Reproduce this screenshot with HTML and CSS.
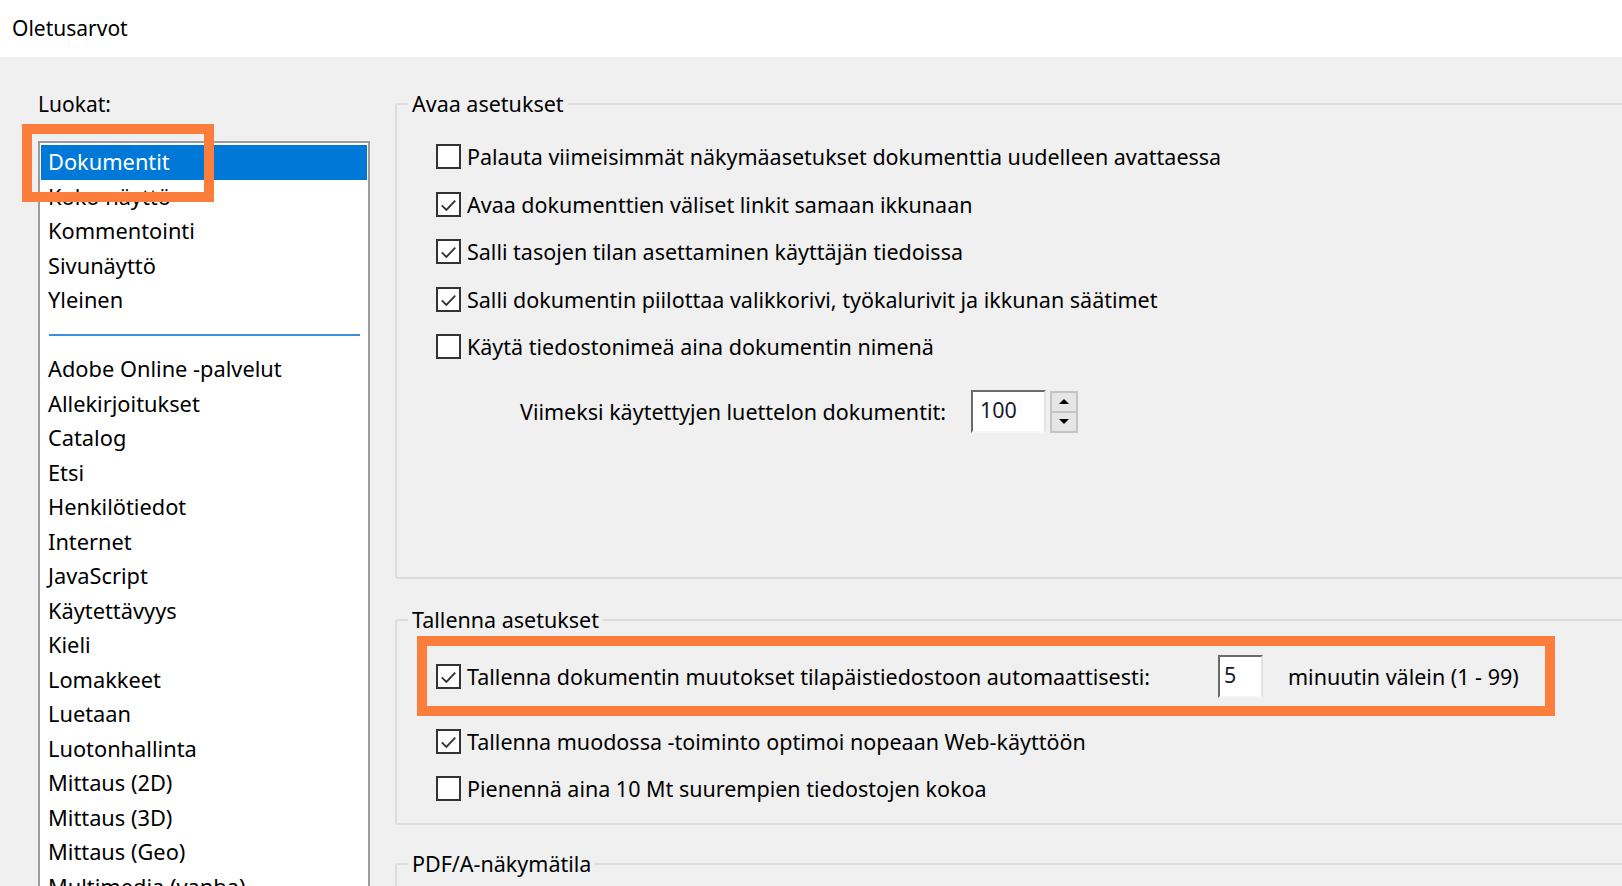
FILE: index.html
```
<!DOCTYPE html>
<html lang="fi">
<head>
<meta charset="utf-8">
<title>Oletusarvot</title>
<link rel="stylesheet" href="styles.css">
</head>
<body>
<header class="titlebar">Oletusarvot</header>
<main class="dialog">
  <section class="categories">
    <div class="cat-label">Luokat:</div>
    <div class="listbox">
      <div class="item selected">Dokumentit</div>
      <div class="item">Koko näyttö</div>
      <div class="item">Kommentointi</div>
      <div class="item">Sivunäyttö</div>
      <div class="item">Yleinen</div>
      <div class="item sep"><span class="sep-line"></span></div>
      <div class="item">Adobe Online -palvelut</div>
      <div class="item">Allekirjoitukset</div>
      <div class="item">Catalog</div>
      <div class="item">Etsi</div>
      <div class="item">Henkilötiedot</div>
      <div class="item">Internet</div>
      <div class="item">JavaScript</div>
      <div class="item">Käytettävyys</div>
      <div class="item">Kieli</div>
      <div class="item">Lomakkeet</div>
      <div class="item">Luetaan</div>
      <div class="item">Luotonhallinta</div>
      <div class="item">Mittaus (2D)</div>
      <div class="item">Mittaus (3D)</div>
      <div class="item">Mittaus (Geo)</div>
      <div class="item">Multimedia (vanha)</div>
    </div>
    <div class="highlight-box"></div>
  </section>

  <section class="settings">
    <fieldset class="group group-open">
      <legend>Avaa asetukset</legend>
      <div class="row"><span class="cb"></span><span>Palauta viimeisimmät näkymäasetukset dokumenttia uudelleen avattaessa</span></div>
      <div class="row"><span class="cb"><svg viewBox="0 0 25 25"><polyline points="4.5,13.5 10,19 20.5,8"/></svg></span><span>Avaa dokumenttien väliset linkit samaan ikkunaan</span></div>
      <div class="row"><span class="cb"><svg viewBox="0 0 25 25"><polyline points="4.5,13.5 10,19 20.5,8"/></svg></span><span>Salli tasojen tilan asettaminen käyttäjän tiedoissa</span></div>
      <div class="row"><span class="cb"><svg viewBox="0 0 25 25"><polyline points="4.5,13.5 10,19 20.5,8"/></svg></span><span>Salli dokumentin piilottaa valikkorivi, työkalurivit ja ikkunan säätimet</span></div>
      <div class="row"><span class="cb"></span><span>Käytä tiedostonimeä aina dokumentin nimenä</span></div>
      <div class="spin-row">
        <span class="spin-label">Viimeksi käytettyjen luettelon dokumentit:</span>
        <span class="textbox tb-wide">100</span>
        <span class="spinner">
          <span class="spin-btn"><span class="tri-up"></span></span>
          <span class="spin-btn"><span class="tri-down"></span></span>
        </span>
      </div>
    </fieldset>

    <fieldset class="group group-save">
      <legend>Tallenna asetukset</legend>
      <div class="row row-marked">
        <span class="cb"><svg viewBox="0 0 25 25"><polyline points="4.5,13.5 10,19 20.5,8"/></svg></span>
        <span class="auto-label">Tallenna dokumentin muutokset tilapäistiedostoon automaattisesti:</span>
        <span class="textbox tb-small">5</span>
        <span class="unit">minuutin välein (1 - 99)</span>
      </div>
      <div class="row row-plain"><span class="cb"><svg viewBox="0 0 25 25"><polyline points="4.5,13.5 10,19 20.5,8"/></svg></span><span>Tallenna muodossa -toiminto optimoi nopeaan Web-käyttöön</span></div>
      <div class="row row-plain"><span class="cb"></span><span>Pienennä aina 10 Mt suurempien tiedostojen kokoa</span></div>
    </fieldset>

    <fieldset class="group group-pdfa">
      <legend>PDF/A-näkymätila</legend>
    </fieldset>
  </section>
</main>
</body>
</html>
```

FILE: styles.css
```
* { box-sizing: border-box; }

html, body {
  margin: 0;
  padding: 0;
  width: 1622px;
  height: 886px;
  overflow: hidden;
  font-family: "Noto Sans", "Open Sans", sans-serif;
  font-size: 21px;
  color: #000;
}

body { background: #f0f0f0; }

.titlebar {
  height: 57px;
  line-height: 57px;
  padding-left: 12px;
  background: #fff;
}

.dialog {
  display: flex;
  height: 829px;
  background: #f0f0f0;
}

/* ---------- left: categories ---------- */
.categories {
  position: relative;
  width: 395px;
  flex: none;
  padding: 32px 0 0 38px;
}

.cat-label {
  line-height: 30px;
  margin-bottom: 22px;
}

.listbox {
  width: 332px;
  height: 800px;
  background: #fff;
  border: 2px solid #9c9c9c;
  padding: 2px 1px;
  overflow: hidden;
  font-size: 21.8px;
}

.item {
  height: 34.5px;
  line-height: 34.5px;
  padding-left: 7px;
  white-space: nowrap;
}

.item.selected {
  background: #0078d7;
  color: #fff;
}

.item.sep {
  display: flex;
  align-items: center;
  padding: 0 7px 0 8px;
}

.sep-line {
  display: block;
  width: 100%;
  height: 2px;
  background: #3d8ede;
}

.highlight-box {
  position: absolute;
  left: 22px;
  top: 67px;
  width: 192px;
  height: 78px;
  border: 10px solid #fd7e3c;
  pointer-events: none;
}

/* ---------- right: settings ---------- */
.settings {
  flex: 1;
  min-width: 0;
  padding-top: 32px;
  margin-right: -40px;
  font-size: 21.5px;
}

.group {
  margin: 0;
  border: 2px solid #dcdcdc;
  border-radius: 3px;
  min-width: 0;
}

.group legend {
  line-height: 30px;
  padding: 0 4px;
}

.group-open {
  padding: 25px 0 144px 39px;
}
.group-open legend { margin-left: -28px; }

.row {
  display: flex;
  align-items: center;
  height: 25px;
  line-height: 25px;
  white-space: nowrap;
}

.group-open .row + .row { margin-top: 22.6px; }

.cb {
  flex: none;
  width: 25px;
  height: 25px;
  margin-right: 6px;
  border: 2px solid #333;
  background: #fff;
  display: flex;
}

.cb svg {
  width: 21px;
  height: 21px;
  fill: none;
  stroke: #333;
  stroke-width: 2.2;
}

.spin-row {
  display: flex;
  align-items: center;
  margin-top: 31px;
  margin-left: 84px;
  height: 43px;
}

.spin-label {
  width: 451px;
  white-space: nowrap;
}

.textbox {
  height: 43px;
  background: #fff;
  border-style: solid;
  border-width: 2px;
  border-color: #6a6a6a #e3e3e3 #f5f5f5 #6a6a6a;
  line-height: 36px;
  padding-left: 7px;
  color: #1b1b2e;
}

.tb-wide { width: 75px; }
.tb-small { width: 45px; padding-left: 4px; }

.spinner {
  display: flex;
  flex-direction: column;
  margin-left: 4px;
  width: 28px;
  height: 42px;
}

.spin-btn {
  flex: 1;
  background: #e6e6e6;
  border: 2px solid #c4c4c4;
  display: flex;
  align-items: center;
  justify-content: center;
}

.spin-btn + .spin-btn { border-top-width: 1px; }
.spin-btn:first-child { border-bottom-width: 1px; }

.tri-up, .tri-down {
  width: 0;
  height: 0;
  border-left: 5px solid transparent;
  border-right: 5px solid transparent;
}
.tri-up { border-bottom: 5px solid #000; }
.tri-down { border-top: 5px solid #000; }

.group-save {
  margin-top: 26px;
  padding: 1px 0 22px 20px;
}
.group-save legend { margin-left: -9px; }

.row-marked {
  width: 1138px;
  height: 80px;
  border: 10px solid #fd7e3c;
  padding-left: 9px;
}

.auto-label { width: 751px; }

.unit { margin-left: 25px; }

.row-plain { padding-left: 19px; }
.row-marked + .row-plain { margin-top: 13px; }
.row-plain + .row-plain { margin-top: 22px; }

.group-pdfa {
  margin-top: 24px;
  height: 80px;
  padding: 0;
}
.group-pdfa legend { margin-left: 11px; }
```
